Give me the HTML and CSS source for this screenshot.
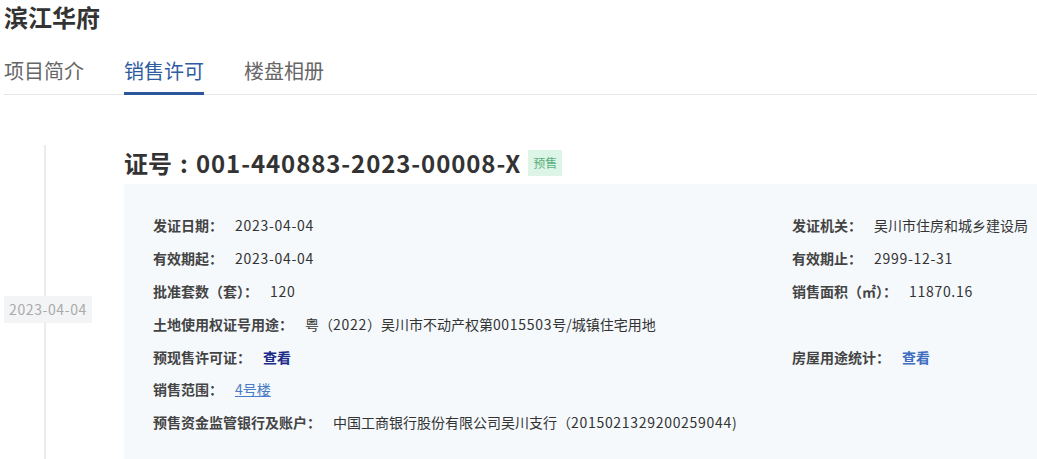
FILE: index.html
```html
<!DOCTYPE html>
<html lang="zh-CN">
<head>
<meta charset="utf-8">
<title>滨江华府</title>
<link rel="stylesheet" href="styles.css">
</head>
<body>
<div class="page">
  <h1 class="title">滨江华府</h1>
  <nav class="tabs">
    <span class="tab">项目简介</span>
    <span class="tab active">销售许可</span>
    <span class="tab">楼盘相册</span>
  </nav>
  <section class="timeline">
    <div class="time-col">
      <span class="date">2023-04-04</span>
    </div>
    <div class="main-col">
      <h2 class="cert">证号<span class="colon">:</span><span class="cert-no">001-440883-2023-00008-X</span><span class="badge">预售</span></h2>
      <div class="card">
        <div class="row"><span class="label">发证日期：</span><span class="value num">2023-04-04</span></div>
        <div class="row"><span class="label">发证机关：</span><span class="value">吴川市住房和城乡建设局</span></div>
        <div class="row"><span class="label">有效期起：</span><span class="value num">2023-04-04</span></div>
        <div class="row"><span class="label">有效期止：</span><span class="value num">2999-12-31</span></div>
        <div class="row"><span class="label">批准套数（套）：</span><span class="value num">120</span></div>
        <div class="row"><span class="label">销售面积（㎡）：</span><span class="value num">11870.16</span></div>
        <div class="row full"><span class="label">土地使用权证号用途：</span><span class="value">粤（<span class="num">2022</span>）吴川市不动产权第<span class="num">0015503</span>号/城镇住宅用地</span></div>
        <div class="row"><span class="label">预现售许可证：</span><a class="link dark">查看</a></div>
        <div class="row"><span class="label">房屋用途统计：</span><a class="link">查看</a></div>
        <div class="row full"><span class="label">销售范围：</span><a class="link under">4号楼</a></div>
        <div class="row full"><span class="label">预售资金监管银行及账户：</span><span class="value">中国工商银行股份有限公司吴川支行（<span class="num">2015021329200259044)</span></span></div>
      </div>
    </div>
  </section>
</div>
</body>
</html>
```

FILE: styles.css
```css
html, body {
  margin: 0;
  padding: 0;
  background: #fff;
  overflow: hidden;
}
body {
  font-family: "Noto Sans CJK SC", "Noto Sans", sans-serif;
  color: #333;
}
.page {
  padding-left: 4px;
}
.title {
  margin: 0;
  font-size: 24px;
  line-height: 34px;
  font-weight: bold;
  color: #333;
}
.tabs {
  display: flex;
  gap: 40px;
  margin-top: 23px;
  border-bottom: 1px solid #e6e6e6;
  height: 37px;
}
.tab {
  font-size: 20px;
  line-height: 28px;
  color: #666;
  height: 35px;
}
.tab.active {
  color: #2f5c9e;
  border-bottom: 3px solid #2b579a;
}
.timeline {
  display: flex;
  margin-top: 50px;
}
.time-col {
  position: relative;
  width: 120px;
  flex: none;
  min-height: 320px;
}
.time-col::before {
  content: "";
  position: absolute;
  left: 40px;
  top: 0;
  bottom: 0;
  width: 2px;
  background: #ececec;
}
.date {
  position: relative;
  display: block;
  margin-top: 151px;
  width: 88px;
  height: 27px;
  line-height: 27px;
  text-align: center;
  font-size: 14px;
  letter-spacing: 0.6px;
  color: #aaa;
  background: #f3f4f6;
}
.main-col {
  flex: 1;
  padding-top: 1px;
}
.cert {
  margin: 0 0 4px;
  font-size: 24px;
  line-height: 34px;
  font-weight: bold;
  color: #333;
  display: flex;
  align-items: center;
}
.colon {
  width: 24px;
  text-align: center;
}
.cert-no {
  letter-spacing: 0.9px;
}
.badge {
  margin-left: 7px;
  width: 34px;
  height: 26px;
  line-height: 26px;
  text-align: center;
  font-size: 12px;
  font-weight: normal;
  letter-spacing: 0;
  color: #5aae7b;
  background: #dcf5e7;
}
.card {
  background: #f5f9fc;
  padding: 25px 0 40px 29px;
  display: grid;
  grid-template-columns: 1fr 245px;
}
.row {
  display: flex;
  align-items: center;
  height: 32.8px;
  font-size: 14px;
  white-space: nowrap;
}
.row.full {
  grid-column: 1 / -1;
}
.label {
  font-weight: bold;
  color: #444;
  margin-right: 12px;
}
.value {
  color: #333;
}
.num {
  letter-spacing: 0.7px;
}
.link {
  font-weight: bold;
  color: #3d6cc0;
  cursor: pointer;
}
.link.dark {
  color: #1c2a86;
}
.link.under {
  font-weight: normal;
  color: #4a7bc8;
  text-decoration: underline;
}
```
